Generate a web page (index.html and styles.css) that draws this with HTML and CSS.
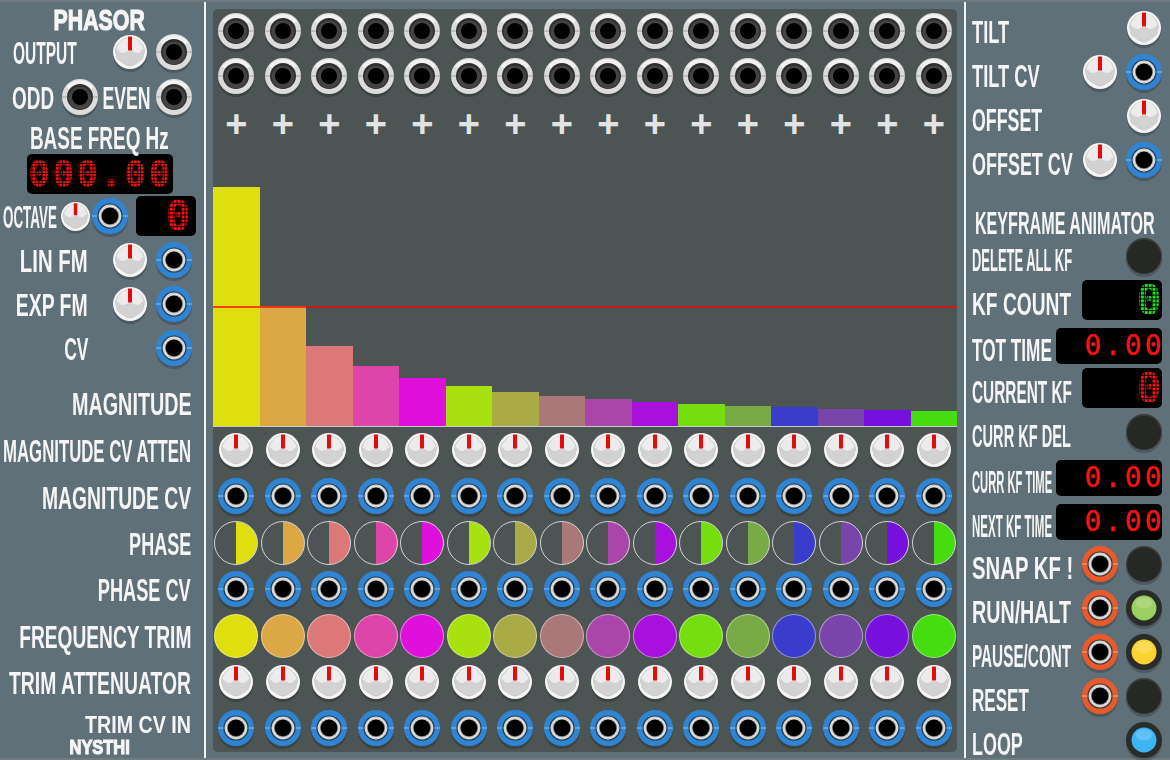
FILE: index.html
```html
<!DOCTYPE html>
<html lang="en">
<head>
  <meta charset="UTF-8" />
  <title>Nysthi Phasor</title>
  <link rel="stylesheet" href="styles.css">
</head>
<body>

<!-- shared module parts -->
<svg class="defs" aria-hidden="true">
  <symbol id="jack" viewBox="0 0 36 36" overflow="visible">
    <circle cx="18" cy="21" r="18" fill="#000" opacity=".2"/>
    <circle cx="18" cy="18" r="18" fill="#dcdcdc"/>
    <path d="M4 8a18 18 0 0 1 28 0l-4 3a13 13 0 0 0-20 0z" fill="#f2f2f2"/>
    <rect x="0" y="17.4" width="5.500" height="1.200" fill="#ababab"/>
    <rect x="30.500" y="17.4" width="5.500" height="1.200" fill="#ababab"/>
    <circle cx="18" cy="18" r="13" fill="#2e2e2e"/>
    <circle cx="18" cy="19" r="11.400" fill="#444"/>
    <circle cx="18" cy="18" r="8" fill="#000"/>
  </symbol>
  <symbol id="socket" viewBox="0 0 36 36" overflow="visible">
    <circle cx="18" cy="21" r="18" fill="#000" opacity=".2"/>
    <circle cx="18" cy="18" r="18" fill="currentColor"/>
    <rect x="0" y="17.4" width="6" height="1.200" fill="#fff" opacity=".4"/>
    <rect x="30" y="17.4" width="6" height="1.200" fill="#fff" opacity=".4"/>
    <circle cx="18" cy="18" r="12.600" fill="#1c2a36" opacity=".85"/>
    <circle cx="18" cy="18" r="11.400" fill="#d8d8d8"/>
    <circle cx="18" cy="18" r="8.800" fill="#555"/>
    <circle cx="18" cy="18" r="8.200" fill="#000"/>
  </symbol>
  <symbol id="knob" viewBox="0 0 34 34" overflow="visible">
    <circle cx="17" cy="20" r="17" fill="#000" opacity=".2"/>
    <circle cx="17" cy="17" r="17" fill="#f5f5f5"/>
    <path d="M2.500 15C3 10 9 2.500 17 2.500S31 10 31.500 15c.3 3-1.500 4.500-1.300 6.500.2 2.500-3.200 4.500-5.400 6-2 1.300-5.300 3.500-7.800 3.500s-5.800-2.200-7.800-3.500c-2.200-1.500-5.600-3.500-5.400-6 .2-2-1.600-3.500-1.300-6.500z" fill="#d2d2d2" stroke="#bdbdbd" stroke-width=".6"/>
    <path d="M3.500 14C5.500 7.500 10 2.800 17 2.800S28.500 7.500 30.500 14c-2.500 1-3.500 4-6 4-3 0-4-2-7.500-2s-4.500 2-7.500 2c-2.500 0-3.500-3-6-4z" fill="#ececec"/>
    <rect x="15" y="1.500" width="4" height="14" rx=".6" fill="#e40b0b"/>
  </symbol>
  <symbol id="button" viewBox="0 0 36 36" overflow="visible">
    <circle cx="18" cy="21" r="18" fill="#000" opacity=".2"/>
    <circle cx="18" cy="18" r="18" fill="#3a3c3a"/>
    <circle cx="18" cy="18.600" r="16.800" fill="#262826"/>
  </symbol>
  <symbol id="light" viewBox="0 0 36 36" overflow="visible">
    <circle cx="18" cy="21" r="18" fill="#000" opacity=".2"/>
    <circle cx="18" cy="18" r="18" fill="#2a2c2a"/>
    <circle cx="18" cy="18" r="12.500" fill="currentColor"/>
    <ellipse cx="18" cy="13" rx="8.500" ry="5.500" fill="#fff" opacity=".18"/>
  </symbol>
</svg>

<div class="rack">

  <div class="panel panel-left">
    <div class="brand"><span class="lbl lbl-c heavy" data-w="91">PHASOR</span></div>

    <div class="row row-ctl">
      <span class="lbl" data-w="64">OUTPUT</span>
      <svg class="part knob"><use href="#knob"/></svg>
      <svg class="part"><use href="#jack"/></svg>
    </div>

    <div class="row row-odd">
      <span class="lbl" data-w="42">ODD</span>
      <svg class="part"><use href="#jack"/></svg>
      <span class="lbl lbl-c" data-w="48">EVEN</span>
      <svg class="part"><use href="#jack"/></svg>
    </div>

    <div class="base-title"><span class="lbl lbl-c" data-w="139">BASE FREQ Hz</span></div>
    <div class="lcd lcd-freq"><span class="digits">000.00</span></div>

    <div class="row row-octave">
      <span class="lbl" data-w="54">OCTAVE</span>
      <svg class="part knob knob-small"><use href="#knob"/></svg>
      <svg class="part blue"><use href="#socket"/></svg>
      <div class="lcd lcd-int"><span class="digits">0</span></div>
    </div>

    <div class="row row-ctl row-right">
      <span class="lbl lbl-r" data-w="68">LIN FM</span>
      <svg class="part knob"><use href="#knob"/></svg>
      <svg class="part blue"><use href="#socket"/></svg>
    </div>
    <div class="row row-ctl row-right">
      <span class="lbl lbl-r" data-w="72">EXP FM</span>
      <svg class="part knob"><use href="#knob"/></svg>
      <svg class="part blue"><use href="#socket"/></svg>
    </div>
    <div class="row row-ctl row-right">
      <span class="lbl lbl-r" data-w="24">CV</span>
      <i></i>
      <svg class="part blue"><use href="#socket"/></svg>
    </div>

    <div class="side-title"><span class="lbl lbl-r" data-w="120">MAGNITUDE</span></div>
    <div class="side-rows">
      <div class="side-row"><span class="lbl lbl-r" data-w="188">MAGNITUDE CV ATTEN</span></div>
      <div class="side-row"><span class="lbl lbl-r" data-w="149">MAGNITUDE CV</span></div>
      <div class="side-row"><span class="lbl lbl-r" data-w="62">PHASE</span></div>
      <div class="side-row"><span class="lbl lbl-r" data-w="93">PHASE CV</span></div>
      <div class="side-row"><span class="lbl lbl-r" data-w="172">FREQUENCY TRIM</span></div>
      <div class="side-row"><span class="lbl lbl-r" data-w="182">TRIM ATTENUATOR</span></div>
      <div class="side-row side-last">
        <span class="lbl lbl-r lbl-small" data-w="106">TRIM CV IN</span>
        <span class="lbl lbl-c maker heavy" data-w="60">NYSTHI</span>
      </div>
    </div>
  </div>

  <div class="divider"></div>

  <div class="screen">
    <div class="strip strip-first" data-part="jack"></div>
    <div class="strip" data-part="jack"></div>
    <div class="strip" data-part="plus"></div>
    <div class="bars">
      <div class="threshold"></div>
    </div>
    <div class="strip" data-part="knob"></div>
    <div class="strip" data-part="socket"></div>
    <div class="strip" data-part="phase"></div>
    <div class="strip" data-part="socket"></div>
    <div class="strip" data-part="trim"></div>
    <div class="strip" data-part="knob"></div>
    <div class="strip" data-part="socket"></div>
  </div>

  <div class="divider"></div>

  <div class="panel panel-right">
    <div class="kf">
      <span class="lbl" data-w="37">TILT</span>
      <i></i>
      <svg class="part knob"><use href="#knob"/></svg>
    </div>
    <div class="kf">
      <span class="lbl" data-w="68">TILT CV</span>
      <svg class="part knob"><use href="#knob"/></svg>
      <svg class="part blue"><use href="#socket"/></svg>
    </div>
    <div class="kf">
      <span class="lbl" data-w="70">OFFSET</span>
      <i></i>
      <svg class="part knob"><use href="#knob"/></svg>
    </div>
    <div class="kf">
      <span class="lbl" data-w="101">OFFSET CV</span>
      <svg class="part knob"><use href="#knob"/></svg>
      <svg class="part blue"><use href="#socket"/></svg>
    </div>

    <div class="kf-title"><span class="lbl lbl-c" data-w="180">KEYFRAME ANIMATOR</span></div>

    <div class="kf">
      <span class="lbl" data-w="100">DELETE ALL KF</span>
      <i></i>
      <svg class="part"><use href="#button"/></svg>
    </div>
    <div class="kf">
      <span class="lbl" data-w="99">KF COUNT</span>
      <div class="lcd lcd-int lcd-wide green"><span class="digits">0</span></div>
    </div>
    <div class="kf kf-gap">
      <span class="lbl" data-w="80">TOT TIME</span>
      <div class="lcd lcd-time"><span class="digits">0.00</span></div>
    </div>
    <div class="kf kf-tight">
      <span class="lbl" data-w="100">CURRENT KF</span>
      <div class="lcd lcd-int lcd-wide"><span class="digits">0</span></div>
    </div>
    <div class="kf kf-gap">
      <span class="lbl" data-w="99">CURR KF DEL</span>
      <i></i>
      <svg class="part"><use href="#button"/></svg>
    </div>
    <div class="kf kf-gap">
      <span class="lbl" data-w="80">CURR KF TIME</span>
      <div class="lcd lcd-time"><span class="digits">0.00</span></div>
    </div>
    <div class="kf">
      <span class="lbl" data-w="80">NEXT KF TIME</span>
      <div class="lcd lcd-time"><span class="digits">0.00</span></div>
    </div>
    <div class="kf kf-tight">
      <span class="lbl" data-w="101">SNAP KF !</span>
      <svg class="part orange"><use href="#socket"/></svg>
      <svg class="part"><use href="#button"/></svg>
    </div>
    <div class="kf kf-gap">
      <span class="lbl" data-w="99">RUN/HALT</span>
      <svg class="part orange"><use href="#socket"/></svg>
      <svg class="part lit-green"><use href="#light"/></svg>
    </div>
    <div class="kf">
      <span class="lbl" data-w="99">PAUSE/CONT</span>
      <svg class="part orange"><use href="#socket"/></svg>
      <svg class="part lit-yellow"><use href="#light"/></svg>
    </div>
    <div class="kf">
      <span class="lbl" data-w="57">RESET</span>
      <svg class="part orange"><use href="#socket"/></svg>
      <svg class="part"><use href="#button"/></svg>
    </div>
    <div class="kf">
      <span class="lbl" data-w="51">LOOP</span>
      <i></i>
      <svg class="part lit-blue"><use href="#light"/></svg>
    </div>
  </div>

</div>

<script src="script.js"></script>
</body>
</html>
```

FILE: styles.css
```css
html, body {
  margin: 0;
  padding: 0;
  height: 100%;
  overflow: hidden;
}

body {
  background-color: #5f7079;
  font-family: "Liberation Sans", Arial, sans-serif;
  color: #f5f5f5;
}

.defs {
  position: absolute;
  width: 0;
  height: 0;
}

.rack {
  display: flex;
  box-sizing: border-box;
  height: 760px;
  border-top: 2px solid #6f7b81;
  border-bottom: 2px solid #6f7b81;
}

.panel {
  flex: 0 0 204px;
  width: 204px;
}

.divider {
  flex: 0 0 2px;
  background-color: #f1f4f5;
}

/* labels are squeezed to their width in script.js */
.lbl {
  display: inline-block;
  font-size: 32px;
  font-weight: bold;
  line-height: 32px;
  white-space: nowrap;
  transform-origin: left center;
}

.lbl-r {
  transform-origin: right center;
}

.lbl-c {
  transform-origin: center center;
}

.lbl-small {
  font-size: 23px;
  line-height: 23px;
}

.heavy {
  -webkit-text-stroke: 1.2px #f5f5f5;
}

/* module parts */
.part {
  display: block;
  width: 36px;
  height: 36px;
  overflow: visible;
}

.knob {
  width: 34px;
  height: 34px;
}

.knob-small {
  width: 29px;
  height: 29px;
}

.blue { color: #2f85d4; }
.orange { color: #e8592b; }
.lit-green { color: #9ccf62; }
.lit-yellow { color: #fbd431; }
.lit-blue { color: #3db4f3; }

/* left panel */
.row {
  display: grid;
  align-items: center;
  justify-items: center;
}

.row .lbl {
  margin-top: 2px;
}

.brand {
  display: flex;
  justify-content: center;
  align-items: center;
  box-sizing: border-box;
  height: 28px;
  padding-top: 8px;
  padding-right: 6px;
}

.brand .lbl {
  font-size: 30px;
  line-height: 20px;
}

.row-ctl {
  grid-template-columns: 108px 44px 44px;
  height: 44px;
}

.row-ctl > .lbl {
  justify-self: start;
  margin-left: 13px;
}

.row-right > .lbl {
  justify-self: end;
  margin-right: 20px;
  margin-left: 0;
}

.row-odd {
  grid-template-columns: 58px 44px 50px 44px;
  height: 45px;
}

.row-odd > .lbl:first-child {
  justify-self: start;
  margin-left: 12px;
}

.base-title {
  display: flex;
  justify-content: center;
  align-items: flex-end;
  box-sizing: border-box;
  height: 35px;
  padding-top: 4px;
  margin-right: 6px;
}

.lcd {
  display: flex;
  justify-content: flex-end;
  align-items: center;
  background-color: #000;
  border-radius: 5px;
  box-sizing: border-box;
  --lit: #ff1010;
}

.lcd.green {
  --lit: #1ee61e;
}

/* real digits filled with a dot grid, for the matrix display look */
.digits {
  font-family: "DejaVu Sans Mono", "Liberation Mono", monospace;
  line-height: 1;
  white-space: nowrap;
  color: transparent;
  -webkit-text-stroke: 0.5px transparent;
  background-color: var(--lit);
  background-image:
    linear-gradient(90deg, transparent 84%, #000 84%),
    linear-gradient(transparent 84%, #000 84%);
  background-size: var(--dot) var(--dot);
  -webkit-background-clip: text;
  background-clip: text;
}

.lcd-freq {
  width: 146px;
  height: 40px;
  margin-left: 27px;
}

.lcd-freq .digits {
  --dot: 3.4px;
  font-weight: bold;
  font-size: 35px;
  letter-spacing: 3px;
}

.row-octave {
  grid-template-columns: 58px 34px 36px 68px;
  height: 40px;
  margin-top: 2px;
  margin-bottom: 2px;
}

.row-octave > .lbl {
  justify-self: start;
  margin-left: 3px;
}

.lcd-int {
  width: 60px;
  height: 40px;
  padding-right: 6px;
  justify-self: end;
}

.lcd-int .digits {
  --dot: 3.9px;
  font-weight: bold;
  font-size: 40px;
}

.side-title {
  display: flex;
  justify-content: flex-end;
  align-items: center;
  height: 44px;
  margin-top: 12px;
  margin-bottom: 2px;
  padding-right: 12px;
}

.side-row {
  display: flex;
  flex-direction: column;
  align-items: flex-end;
  justify-content: center;
  height: 46.4px;
  padding-right: 13px;
}

.side-last {
  justify-content: flex-start;
  padding-top: 8px;
}

.maker {
  font-size: 20px;
  line-height: 20px;
  margin-right: 55px;
}

/* centre screen */
.screen {
  flex: 0 0 744px;
  width: 744px;
  height: 743px;
  margin: 7px 7px 0;
  background-color: #4d5454;
  border-radius: 5px;
}

.strip {
  display: grid;
  grid-template-columns: repeat(16, 1fr);
  justify-items: center;
  align-items: center;
  height: 46.4px;
}

.strip-first {
  height: 44px;
}

.plus {
  font-size: 38px;
  line-height: 38px;
  font-weight: bold;
  margin-top: 3px;
  color: #e2e4e4;
}

.bars {
  display: flex;
  align-items: flex-end;
  position: relative;
  height: 280px;
  border-bottom: 1.5px solid #c6cbc8;
}

.bar {
  flex: 1;
}

.threshold {
  position: absolute;
  left: 0;
  right: 0;
  top: 160px;
  height: 2px;
  background-color: rgba(255, 0, 0, 0.7);
}

.phase, .trim {
  box-sizing: border-box;
  width: 44px;
  height: 44px;
  border-radius: 50%;
}

.phase {
  border: 1.500px solid #d2d4d4;
  background-image: linear-gradient(90deg, transparent 50%, var(--c) 50%);
}

.trim {
  border: 1.500px solid rgba(255, 255, 255, 0.45);
  background-color: var(--c);
}

/* right panel */
.panel-right {
  padding-top: 4px;
}

.kf {
  display: grid;
  grid-template-columns: 112px 44px 44px;
  justify-items: center;
  align-items: center;
  height: 44px;
}

.kf > .lbl {
  justify-self: start;
  margin-left: 6px;
  margin-top: 7px;
}

.kf .lcd {
  grid-column: 2 / 4;
  justify-self: end;
  margin-right: 4px;
}

.kf-gap {
  margin-top: 2px;
}

.kf-tight {
  height: 40px;
}

.lcd-wide {
  width: 80px;
  padding-right: 1px;
}

.lcd-time {
  width: 106px;
  height: 36px;
}

.lcd-time .digits {
  --dot: 2.9px;
  font-size: 28px;
  letter-spacing: 3.2px;
  margin-right: -3px;
}

.kf-title {
  display: flex;
  justify-content: center;
  align-items: flex-end;
  height: 52px;
  padding-right: 6px;
}

.kf-title .lbl {
  font-size: 31px;
  margin-bottom: -6px;
}
```

FILE: script.js
```js
const colors = [
  "#dfdf10", "#dca845", "#dd7878", "#dd46a8",
  "#e010dc", "#a8e010", "#aaaa46", "#aa7878",
  "#aa46aa", "#a810dd", "#76dd10", "#78aa46",
  "#3a3ccc", "#7846aa", "#7810dd", "#46dd10"
];

const parts = {
  jack: () => '<svg class="part"><use href="#jack"/></svg>',
  socket: () => '<svg class="part blue"><use href="#socket"/></svg>',
  knob: () => '<svg class="part knob"><use href="#knob"/></svg>',
  plus: () => '<span class="plus">+</span>',
  phase: (c) => `<div class="phase" style="--c:${c}"></div>`,
  trim: (c) => `<div class="trim" style="--c:${c}"></div>`
};

document.querySelectorAll(".strip").forEach((strip) => {
  strip.innerHTML = colors.map((c) => parts[strip.dataset.part](c)).join("");
});

// harmonic magnitudes fall off as 1/n
const bars = document.querySelector(".bars");
const threshold = document.querySelector(".threshold");
colors.forEach((c, i) => {
  const bar = document.createElement("div");
  bar.className = "bar";
  bar.style.height = (239 / (i + 1)) + "px";
  bar.style.backgroundColor = c;
  bars.insertBefore(bar, threshold);
});

// squeeze each label to the width of the panel lettering
document.querySelectorAll("[data-w]").forEach((el) => {
  el.style.transform = `scaleX(${el.dataset.w / el.offsetWidth})`;
});
```
